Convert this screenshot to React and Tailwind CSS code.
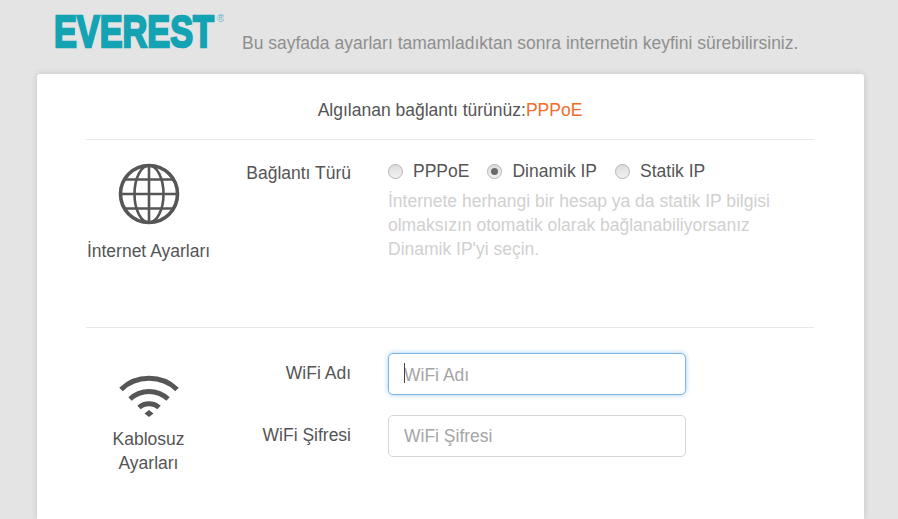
const font = { fontFamily: '"Liberation Sans", Arial, sans-serif' }

function Globe() {
  return (
    <svg width="62" height="62" viewBox="0 0 62 62" fill="none" stroke="#565656" strokeWidth="2.6">
      <circle cx="31" cy="31" r="28.5" strokeWidth="3.6" />
      <ellipse cx="31" cy="31" rx="14.5" ry="28.5" />
      <path d="M31 2.5v57M2.5 31h57M7 16.5h48M7 45.5h48" />
    </svg>
  )
}

function Wifi() {
  return (
    <svg width="62" height="44" viewBox="0 0 62 44" fill="none" stroke="#565656" strokeWidth="5">
      <path d="M3 15.5C18 0.5 44 0.5 59 15.5" />
      <path d="M12 25C23 15 39 15 50 25" />
      <path d="M21 33.5C26.500 28.500 35.500 28.500 41 33.500" />
      <path d="M26.500 39.500L31 36L35.500 39.500L31 43Z" fill="#565656" stroke="none" />
    </svg>
  )
}

function Radio({ label, checked }) {
  return (
    <label className="flex items-center">
      <span className="flex h-[15px] w-[15px] items-center justify-center rounded-full border border-[#b5b5b5] bg-gradient-to-b from-[#dcdcdc] to-[#f2f2f2]">
        {checked && <span className="h-[7px] w-[7px] rounded-full bg-[#6a6a6a]" />}
      </span>
      <span className="ml-[10px] text-[17.5px] text-[#555]">{label}</span>
    </label>
  )
}

export default function App() {
  return (
    <div className="h-[519px] overflow-hidden bg-[#e4e4e4]" style={font}>
      {/* Header */}
      <div className="flex h-[74px] items-start pl-[54px]">
        <svg width="170" height="64" viewBox="0 0 170 64">
          <text transform="translate(0 46.5) scale(1 1.3)" textLength="160" lengthAdjust="spacingAndGlyphs" fontSize="34" fontWeight="700" fill="#14a3b3" fontFamily="Liberation Sans" stroke="#14a3b3" strokeWidth="1.8">EVEREST</text>
          <text x="163" y="22" fontSize="10" fill="#5fb9c6" fontFamily="Liberation Sans">®</text>
        </svg>
        <p className="ml-[18px] mt-[33px] text-[17.5px] leading-[20px] text-[#8f8f8f]">
          Bu sayfada ayarları tamamladıktan sonra internetin keyfini sürebilirsiniz.
        </p>
      </div>

      {/* Card */}
      <div className="ml-[37px] h-[445px] w-[827px] rounded-t-[3px] bg-white pl-[49px] pr-[50px] shadow-[0_0_6px_rgba(0,0,0,0.15)]">
        <div className="flex h-[66px] items-center justify-center border-b border-[#e8e8e8] pt-[8px] text-[17.5px] text-[#555]">
          Algılanan bağlantı türünüz:<span className="text-[#f26c2a]">PPPoE</span>
        </div>

        {/* Internet */}
        <div className="flex h-[188px] border-b border-[#e8e8e8]">
          <div className="flex w-[125px] flex-col items-center pt-[23px]">
            <Globe />
            <span className="mt-[16px] whitespace-nowrap text-[17.5px] leading-[20px] text-[#555]">İnternet Ayarları</span>
          </div>
          <div className="w-[140px] pt-[23px] text-right text-[17.5px] leading-[20px] text-[#555]">Bağlantı Türü</div>
          <div className="pl-[37px] pt-[21px]">
            <div className="flex h-[20px] gap-[18px]">
              <Radio label="PPPoE" />
              <Radio label="Dinamik IP" checked />
              <Radio label="Statik IP" />
            </div>
            <p className="mt-[8px] w-[390px] text-[17.5px] leading-[24px] text-[#d0d0d0]">
              İnternete herhangi bir hesap ya da statik IP bilgisi olmaksızın otomatik olarak bağlanabiliyorsanız Dinamik IP'yi seçin.
            </p>
          </div>
        </div>

        {/* Wireless */}
        <div className="flex">
          <div className="flex w-[125px] flex-col items-center pt-[46px]">
            <Wifi />
            <span className="mt-[9px] text-center text-[17.5px] leading-[24px] text-[#555]">Kablosuz<br />Ayarları</span>
          </div>
          <div className="flex w-[140px] flex-col pt-[25px] text-right text-[17.5px] text-[#555]">
            <span className="h-[62px] leading-[40px]">WiFi Adı</span>
            <span className="leading-[40px]">WiFi Şifresi</span>
          </div>
          <div className="flex flex-col gap-[20px] pl-[37px] pt-[25px]">
            <div className="relative h-[42px] w-[298px] rounded-[5px] border border-[#7db5e6] bg-white shadow-[0_0_5px_rgba(102,175,233,0.6)]">
              <span className="absolute left-[15px] top-[9px] h-[20px] w-px bg-[#444]" />
              <input placeholder="WiFi Adı" className="h-full w-full rounded-[5px] pl-[15px] pt-[2px] text-[17.5px] outline-none placeholder:text-[#a5a5a5]" />
            </div>
            <input placeholder="WiFi Şifresi" className="h-[42px] w-[298px] rounded-[5px] border border-[#d6d6d6] pl-[15px] text-[17.5px] outline-none placeholder:text-[#a5a5a5]" />
          </div>
        </div>
      </div>
    </div>
  )
}
